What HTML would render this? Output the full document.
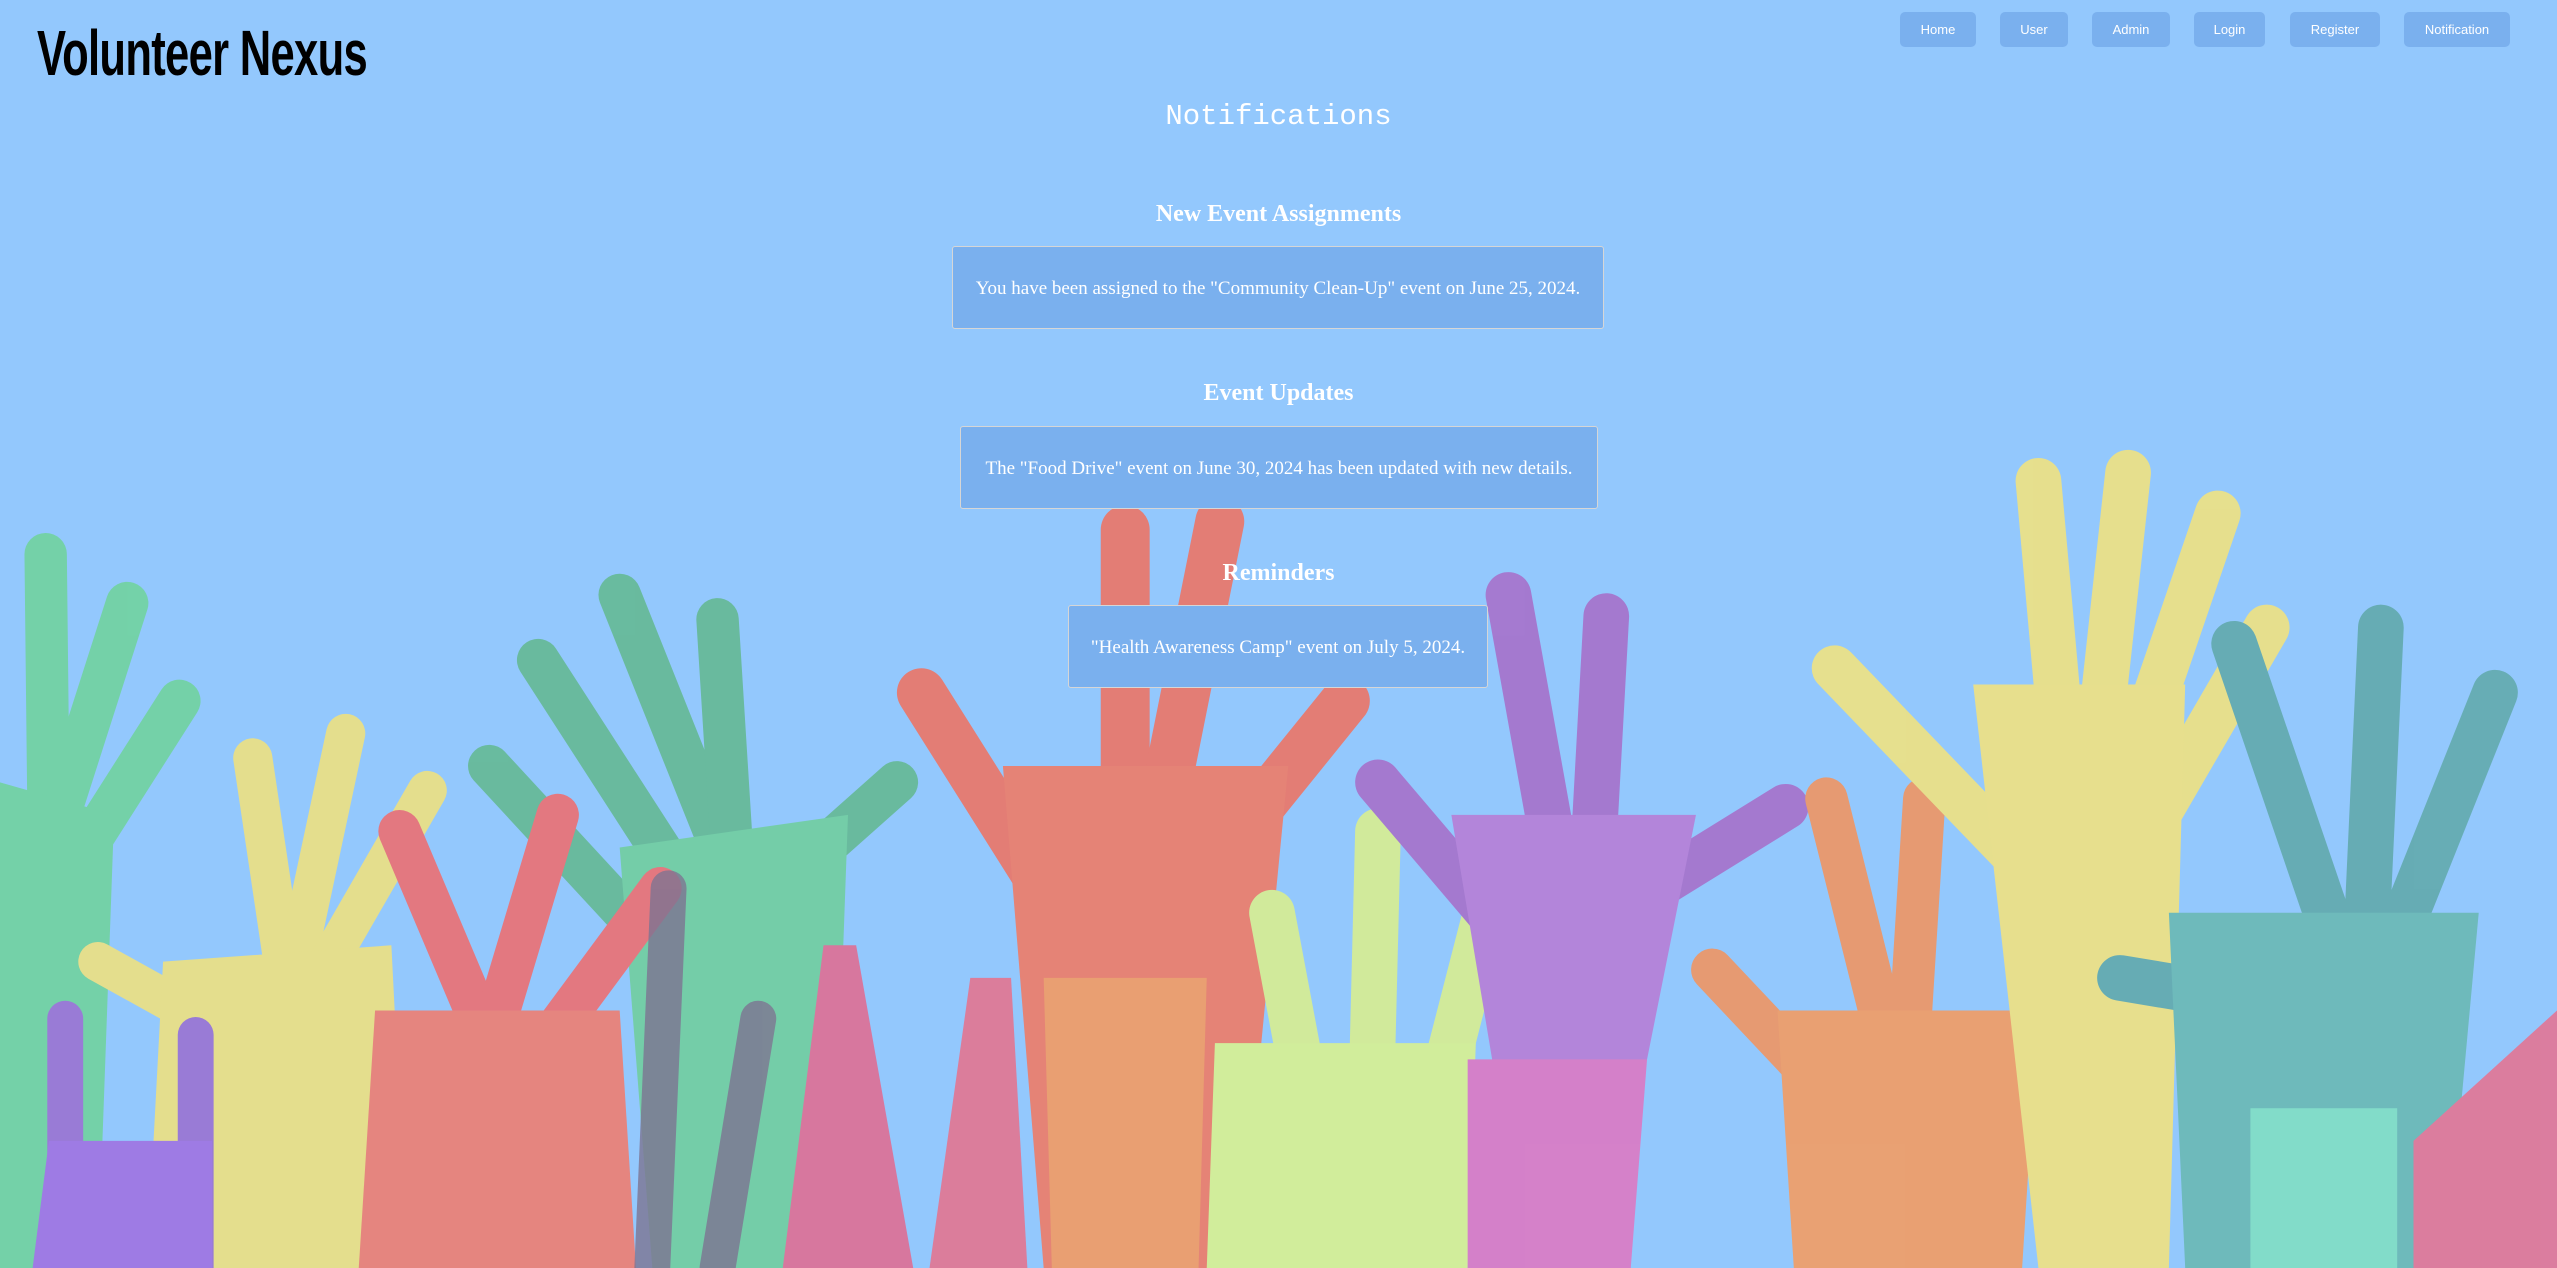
<!DOCTYPE html>
<html><head><meta charset="utf-8"><style>
html,body{margin:0;padding:0}
body{width:2557px;height:1268px;background:#93c8fd;position:relative;overflow:hidden;font-family:"Liberation Serif",serif}
svg.bg{position:absolute;left:0;top:0;width:2557px;height:1268px}
.logo{position:absolute;left:37px;top:16px;font-family:"Liberation Sans",sans-serif;font-weight:bold;font-size:64px;color:#000;transform:scaleX(0.68);transform-origin:left top;letter-spacing:-1px;white-space:nowrap}
.nav a{position:absolute;top:12px;height:35px;line-height:35px;background:#7ab0ee;border-radius:5px;color:#fff;font-family:"Liberation Sans",sans-serif;font-size:13px;text-align:center;text-decoration:none}
h1{position:absolute;left:0;width:2557px;top:100px;margin:0;text-align:center;font-family:"Liberation Mono",monospace;font-weight:normal;font-size:29px;color:#fff}
h2{position:absolute;left:0;width:2557px;margin:0;text-align:center;font-size:24px;font-weight:bold;color:#fff;line-height:30px}
.box{position:absolute;height:81px;background:#7ab0ee;border:1px solid #d6d6d6;border-radius:3px;color:#fff;font-size:19px;line-height:83px;text-align:center;white-space:nowrap}
</style></head><body>
<svg class="bg" viewBox="0 0 1568 778" preserveAspectRatio="none">
<g stroke-linecap="round" stroke-linejoin="round" fill="none" opacity="0.85">
<g stroke="#6fd39a" stroke-width="26"><path d="M20,778 L30,520 L28,340"/><path d="M30,520 L78,370"/><path d="M40,540 L110,430"/><path d="M20,600 L0,560"/></g>
<path d="M0,480 L70,500 L60,778 L0,778Z" fill="#6fd39a" stroke="none"/>
<g stroke="#62b88e" stroke-width="26"><path d="M440,778 L450,540 L380,365"/><path d="M450,540 L440,380"/><path d="M430,560 L330,405"/><path d="M420,600 L300,470"/><path d="M460,560 L550,480"/></g>
<path d="M380,520 L520,500 L510,778 L400,778Z" fill="#6fcf9a" stroke="none"/>
<g stroke="#f3e27a" stroke-width="24"><path d="M180,778 L175,600 L155,465"/><path d="M180,600 L212,450"/><path d="M190,610 L262,485"/><path d="M150,640 L60,590"/></g>
<path d="M100,590 L240,580 L250,778 L90,778Z" fill="#f3e27a" stroke="none"/>
<g stroke="#f26b6b" stroke-width="26"><path d="M290,778 L300,640 L245,510"/><path d="M300,640 L342,500"/><path d="M320,660 L405,545"/></g>
<path d="M230,620 L380,620 L390,778 L220,778Z" fill="#f47a6a" stroke="none"/>
<g stroke="#9b6ed0" stroke-width="22"><path d="M40,778 L40,625"/><path d="M120,778 L120,635"/></g>
<path d="M30,700 L130,700 L130,778 L20,778Z" fill="#a06ee0" stroke="none"/>
<g stroke="#7a6680" stroke-width="22" opacity="0.8"><path d="M400,778 L410,545"/><path d="M440,778 L465,625"/></g>
<path d="M480,778 L505,580 L525,580 L560,778Z" fill="#e46a8e" stroke="none"/>
<path d="M570,778 L595,600 L620,600 L630,778Z" fill="#e8708a" stroke="none"/>
<g stroke="#f2705e" stroke-width="30"><path d="M690,560 L690,325"/><path d="M700,560 L748,320"/><path d="M720,560 L825,430"/><path d="M650,560 L565,425"/></g>
<path d="M615,470 L790,470 L760,778 L640,778Z" fill="#f4775f" stroke="none"/>
<path d="M640,600 L740,600 L735,778 L645,778Z" fill="#f8985a" stroke="none"/>
<g stroke="#dcf08a" stroke-width="28"><path d="M840,710 L845,510"/><path d="M810,720 L780,560"/><path d="M870,720 L915,545"/></g>
<path d="M745,640 L905,640 L900,778 L740,778Z" fill="#dcf48a" stroke="none"/>
<g stroke="#a86cc8" stroke-width="28"><path d="M960,560 L925,365"/><path d="M975,560 L985,378"/><path d="M990,560 L1095,495"/><path d="M930,580 L845,480"/></g>
<path d="M890,500 L1040,500 L1010,650 L920,680Z" fill="#b97ad4" stroke="none"/>
<path d="M900,650 L1010,650 L1000,778 L900,778Z" fill="#e074c0" stroke="none"/>
<g stroke="#f5925a" stroke-width="26"><path d="M1160,650 L1120,490"/><path d="M1170,650 L1180,490"/><path d="M1130,680 L1050,595"/></g>
<path d="M1090,620 L1250,620 L1240,778 L1100,778Z" fill="#f89a5a" stroke="none"/>
<g stroke="#f5e47a" stroke-width="28"><path d="M1270,520 L1250,295"/><path d="M1280,520 L1305,290"/><path d="M1290,520 L1360,315"/><path d="M1300,540 L1390,385"/><path d="M1250,540 L1125,410"/></g>
<path d="M1210,420 L1340,420 L1330,778 L1250,778Z" fill="#f6e47a" stroke="none"/>
<g stroke="#5fa8a8" stroke-width="28"><path d="M1440,600 L1370,395"/><path d="M1450,600 L1460,385"/><path d="M1460,600 L1530,425"/><path d="M1420,620 L1300,600"/></g>
<path d="M1330,560 L1520,560 L1500,778 L1340,778Z" fill="#68b8b0" stroke="none"/>
<path d="M1380,680 L1470,680 L1470,778 L1380,778Z" fill="#80e0c0" stroke="none"/>
<path d="M1480,700 L1568,620 L1568,778 L1480,778Z" fill="#e8708e" stroke="none"/>
</g>
</svg>
<div class="logo">Volunteer Nexus</div>
<div class="nav">
<a style="left:1900px;width:76px">Home</a>
<a style="left:2000px;width:68px">User</a>
<a style="left:2092px;width:78px">Admin</a>
<a style="left:2194px;width:71px">Login</a>
<a style="left:2290px;width:90px">Register</a>
<a style="left:2404px;width:106px">Notification</a>
</div>
<h1>Notifications</h1>
<h2 style="top:199px">New Event Assignments</h2>
<div class="box" style="left:952px;top:246px;width:650px">You have been assigned to the "Community Clean-Up" event on June 25, 2024.</div>
<h2 style="top:378px">Event Updates</h2>
<div class="box" style="left:960px;top:426px;width:636px">The "Food Drive" event on June 30, 2024 has been updated with new details.</div>
<h2 style="top:558px">Reminders</h2>
<div class="box" style="left:1068px;top:605px;width:418px">"Health Awareness Camp" event on July 5, 2024.</div>
</body></html>
